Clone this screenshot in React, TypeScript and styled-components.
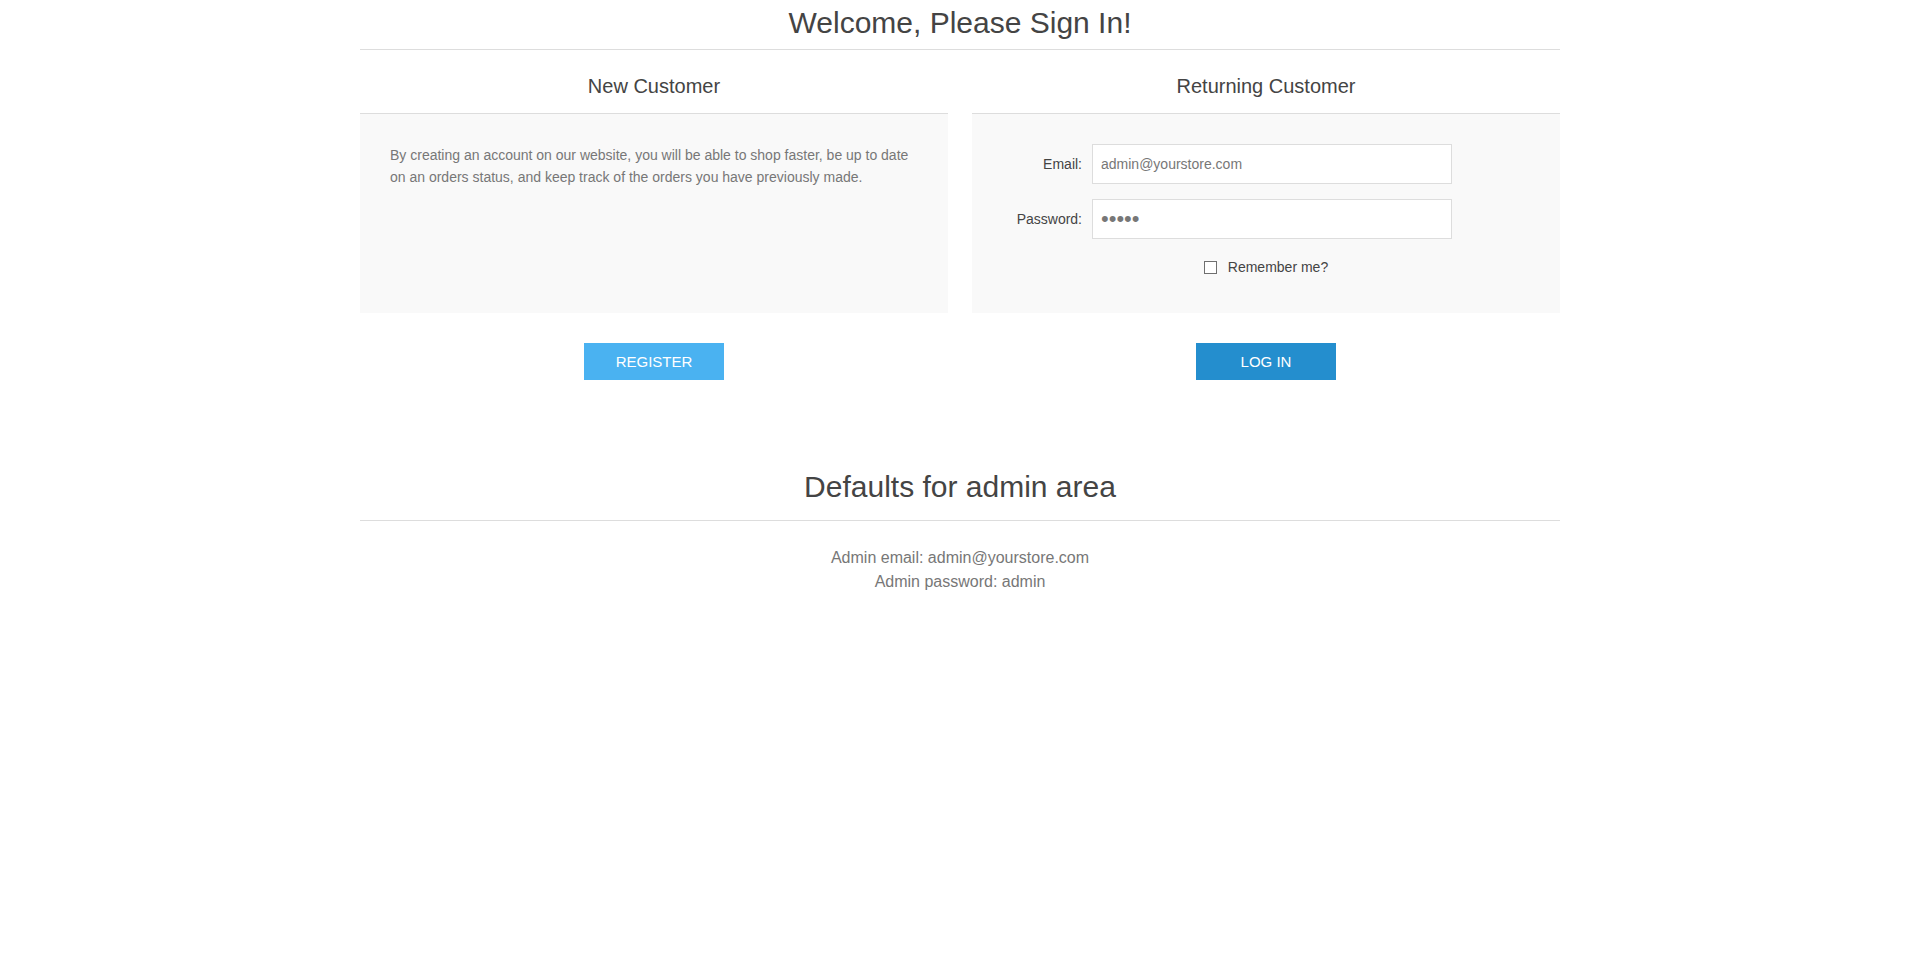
import React from "react";
import styled, { createGlobalStyle, css } from "styled-components";

function App() {
  return (
    <>
      <GlobalStyle />
      <Page>
        <PageTitle $variant="top">
          <H1>Welcome, Please Sign In!</H1>
        </PageTitle>

        <CustomerBlocks>
          <Block>
            <BlockTitle>New Customer</BlockTitle>
            <TextPanel>
              By creating an account on our website, you will be able to shop faster, be up to date
              <br />
              on an orders status, and keep track of the orders you have previously made.
            </TextPanel>
            <Buttons>
              <Button type="button" $variant="register">
                Register
              </Button>
            </Buttons>
          </Block>

          <Block>
            <BlockTitle>Returning Customer</BlockTitle>
            <FormPanel>
              <FieldRow>
                <Label htmlFor="email">Email:</Label>
                <Input id="email" type="text" defaultValue="admin@yourstore.com" />
              </FieldRow>
              <FieldRow>
                <Label htmlFor="password">Password:</Label>
                <Input id="password" type="password" defaultValue="admin" />
              </FieldRow>
              <RememberRow>
                <Checkbox id="remember" type="checkbox" />
                <RememberLabel htmlFor="remember">Remember me?</RememberLabel>
              </RememberRow>
            </FormPanel>
            <Buttons>
              <Button type="button" $variant="login">
                Log in
              </Button>
            </Buttons>
          </Block>
        </CustomerBlocks>

        <AdminSection>
          <PageTitle $variant="section">
            <H1>Defaults for admin area</H1>
          </PageTitle>
          <AdminInfo>
            Admin email: admin@yourstore.com
            <br />
            Admin password: admin
          </AdminInfo>
        </AdminSection>
      </Page>
    </>
  );
}

export default App;

const GlobalStyle = createGlobalStyle`
  *, *::before, *::after {
    box-sizing: border-box;
  }
  body {
    margin: 0;
    background: #fff;
    color: #777;
    font-family: "Liberation Sans", Arial, sans-serif;
    font-size: 14px;
  }
`;

const Page = styled.div`
  width: 1200px;
  margin: 0 auto;
`;

const PageTitle = styled.div<{ $variant: "top" | "section" }>`
  border-bottom: 1px solid #ddd;
  ${({ $variant }) =>
    $variant === "top"
      ? css`
          padding: 6px 10px 9px;
        `
      : css`
          padding: 0 10px 16px;
        `}
`;

const H1 = styled.h1`
  margin: 0;
  font-size: 30px;
  font-weight: normal;
  line-height: 34px;
  color: #444;
  text-align: center;
`;

const CustomerBlocks = styled.div`
  display: grid;
  grid-template-columns: 1fr 1fr;
  gap: 24px;
  margin-top: 25px;
`;

const Block = styled.div`
  display: flex;
  flex-direction: column;
`;

const BlockTitle = styled.div`
  padding: 0 10px 15px;
  border-bottom: 1px solid #ddd;
  font-size: 20px;
  line-height: 23px;
  color: #444;
  text-align: center;
`;

const panel = css`
  flex: 1;
  min-height: 199px;
  background-color: #f9f9f9;
`;

const TextPanel = styled.div`
  ${panel};
  padding: 30px;
  line-height: 22px;
  color: #777;
`;

const FormPanel = styled.div`
  ${panel};
  padding: 30px 0 0;
`;

const FieldRow = styled.div`
  display: flex;
  align-items: center;
  margin-bottom: 15px;
`;

const Label = styled.label`
  width: 110px;
  margin-right: 10px;
  text-align: right;
  color: #444;
  font-size: 14px;
`;

const Input = styled.input`
  width: 360px;
  height: 40px;
  padding: 0 8px;
  border: 1px solid #ddd;
  background: #fff;
  color: #777;
  font-family: "Liberation Sans", Arial, sans-serif;
  font-size: 14px;
  outline: none;

  &[type="password"] {
    font-size: 22px;
  }
`;

const RememberRow = styled.div`
  display: flex;
  align-items: center;
  justify-content: center;
  height: 26px;
`;

const Checkbox = styled.input`
  appearance: none;
  width: 13px;
  height: 13px;
  margin: 0 11px 0 0;
  border: 1px solid #6f6f6f;
  background: #fff;
`;

const RememberLabel = styled.label`
  color: #444;
  font-size: 14px;
`;

const Buttons = styled.div`
  display: flex;
  justify-content: center;
  padding-top: 30px;
`;

const Button = styled.button<{ $variant: "register" | "login" }>`
  min-width: 140px;
  height: 37px;
  padding: 0 30px;
  border: none;
  background-color: ${({ $variant }) => ($variant === "login" ? "#248ece" : "#4ab2f1")};
  color: #fff;
  font-family: "Liberation Sans", Arial, sans-serif;
  font-size: 15px;
  text-transform: uppercase;
  cursor: pointer;
`;

const AdminSection = styled.div`
  margin-top: 90px;
`;

const AdminInfo = styled.div`
  margin-top: 25px;
  font-size: 16px;
  line-height: 24px;
  color: #777;
  text-align: center;
`;
